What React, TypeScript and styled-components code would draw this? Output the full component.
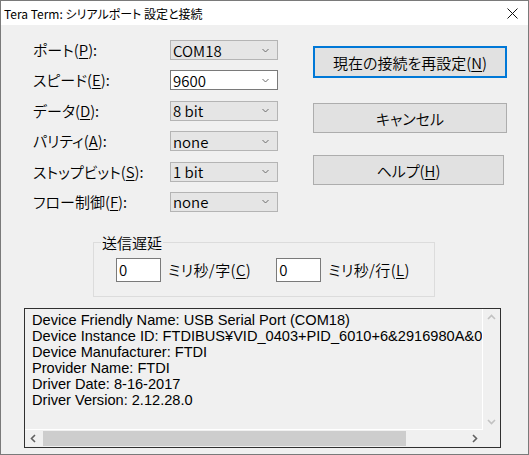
import styled, { createGlobalStyle } from "styled-components";

const GlobalStyle = createGlobalStyle`
  html, body {
    margin: 0;
    padding: 0;
    background: #ffffff;
  }
  body {
    font-family: "Noto Sans CJK JP", "Liberation Sans", sans-serif;
    font-weight: 350;
    color: #000;
  }
`;

const Window = styled.div`
  width: 529px;
  height: 455px;
  box-sizing: border-box;
  border: 1px solid #7a7a7a;
  background: #f0f0f0;
  display: flex;
  flex-direction: column;
  overflow: hidden;
`;

const TitleBar = styled.div`
  height: 24px;
  flex: none;
  background: #ffffff;
  display: flex;
  align-items: center;
  justify-content: space-between;
  padding: 0 10px 0 3px;
  font-size: 12px;
  font-weight: 400;
  font-feature-settings: "palt";
`;

const CloseGlyph = styled.svg`
  width: 11px;
  height: 11px;
  display: block;
`;

const Body = styled.div`
  display: flex;
  flex-direction: column;
  padding-top: 15px;
`;

const TopRow = styled.div`
  display: flex;
  margin-left: 32px;
`;

const FieldGrid = styled.div`
  display: grid;
  grid-template-columns: 137px 108px;
  grid-auto-rows: 20px;
  row-gap: 10.4px;
  align-items: center;
`;

const Label = styled.span`
  font-size: 15px;
  line-height: 18px;
  white-space: nowrap;
  font-feature-settings: "palt";
`;

const Accel = styled.span`
  text-decoration: underline;
  text-underline-offset: 2px;
`;

const Combo = styled.div<{ $editable?: boolean }>`
  height: 20px;
  box-sizing: border-box;
  border: 1px solid ${({ $editable }) => ($editable ? "#7a7a7a" : "#b4b4b4")};
  background: ${({ $editable }) => ($editable ? "#ffffff" : "#e5e5e5")};
  display: flex;
  align-items: center;
  justify-content: space-between;
  padding: 0 8px 0 2px;
  font-size: 15px;
`;

const ComboArrow = styled.svg`
  width: 7px;
  height: 5px;
  display: block;
`;

const ButtonColumn = styled.div`
  display: flex;
  flex-direction: column;
  margin-left: 35px;
`;

const DialogButton = styled.div<{ $default?: boolean; $top: number; $width: number; $height: number }>`
  width: ${({ $width }) => $width}px;
  height: ${({ $height }) => $height}px;
  margin-top: ${({ $top }) => $top}px;
  box-sizing: border-box;
  border: ${({ $default }) => ($default ? "2px solid #0078d7" : "1px solid #adadad")};
  background: #e1e1e1;
  display: flex;
  align-items: center;
  justify-content: center;
  font-size: 15px;
  font-feature-settings: "palt";
`;

const GroupBox = styled.fieldset`
  margin: 22px 0 0 92px;
  padding: 0;
  width: 342px;
  box-sizing: border-box;
  border: 1px solid #dcdcdc;
`;

const GroupTitle = styled.legend`
  margin-left: 7px;
  padding: 0 1px;
  font-size: 15px;
  line-height: 18px;
`;

const DelayRow = styled.div`
  display: flex;
  align-items: center;
  padding: 6px 0 14px 22px;
`;

const NumberEdit = styled.div<{ $gapBefore: number }>`
  width: 45px;
  height: 24px;
  box-sizing: border-box;
  margin-left: ${({ $gapBefore }) => $gapBefore}px;
  border: 1px solid #7a7a7a;
  background: #ffffff;
  display: flex;
  align-items: center;
  padding-left: 2px;
  font-size: 15px;
`;

const UnitLabel = styled(Label)`
  margin-left: 7px;
  letter-spacing: 0.4px;
`;

const InfoBox = styled.div`
  margin: 11px 0 0 23px;
  width: 477px;
  height: 140px;
  box-sizing: border-box;
  border: 1px solid #303030;
  background: #f0f0f0;
  display: grid;
  grid-template-columns: 1fr 17px;
  grid-template-rows: 1fr 17px;
`;

const InfoText = styled.div`
  border-right: 1px solid #ffffff;
  border-bottom: 1px solid #ffffff;
  overflow: hidden;
  padding: 3px 0 0 7px;
  font-family: "Liberation Sans", sans-serif;
  font-weight: 400;
  font-size: 14.6px;
  line-height: 16px;
`;

const InfoLine = styled.div`
  white-space: nowrap;
`;

const VScroll = styled.div`
  display: flex;
  flex-direction: column;
  justify-content: space-between;
`;

const HScroll = styled.div`
  display: flex;
  align-items: center;
`;

const ArrowCell = styled.div`
  width: 17px;
  height: 17px;
  flex: none;
  display: flex;
  align-items: center;
  justify-content: center;
`;

const Track = styled.div`
  flex: 1;
  height: 15px;
`;

const Thumb = styled.div`
  height: 15px;
  width: 363px;
  margin-left: 1px;
  background: #cdcdcd;
`;

type Dir = "up" | "down" | "left" | "right";

const chevronPaths: Record<Dir, string> = {
  up: "M1 6 L4.5 2.5 L8 6",
  down: "M1 3 L4.5 6.5 L8 3",
  left: "M6 1 L2.5 4.5 L6 8",
  right: "M3 1 L6.5 4.5 L3 8",
};

function Chevron({ dir, color }: { dir: Dir; color: string }) {
  return (
    <svg width="9" height="9" viewBox="0 0 9 9">
      <path d={chevronPaths[dir]} fill="none" stroke={color} strokeWidth="1.6" />
    </svg>
  );
}

const fields = [
  { label: "ポート", key: "P", value: "COM18" },
  { label: "スピード", key: "E", value: "9600", editable: true },
  { label: "データ", key: "D", value: "8 bit" },
  { label: "パリティ", key: "A", value: "none" },
  { label: "ストップビット", key: "S", value: "1 bit" },
  { label: "フロー制御", key: "F", value: "none" },
];

const infoLines = [
  "Device Friendly Name: USB Serial Port (COM18)",
  "Device Instance ID: FTDIBUS¥VID_0403+PID_6010+6&2916980A&0",
  "Device Manufacturer: FTDI",
  "Provider Name: FTDI",
  "Driver Date: 8-16-2017",
  "Driver Version: 2.12.28.0",
];

export default function App() {
  return (
    <>
      <GlobalStyle />
      <Window>
        <TitleBar>
          <span>Tera Term: シリアルポート 設定と接続</span>
          <CloseGlyph viewBox="0 0 11 11">
            <path d="M0.5 0.5 L10.5 10.5 M10.5 0.5 L0.5 10.5" stroke="#111" strokeWidth="1" />
          </CloseGlyph>
        </TitleBar>
        <Body>
          <TopRow>
            <FieldGrid>
              {fields.map((f) => [
                <Label key={f.key + "l"}>
                  {f.label}(<Accel>{f.key}</Accel>):
                </Label>,
                <Combo key={f.key + "c"} $editable={f.editable}>
                  <span>{f.value}</span>
                  <ComboArrow viewBox="0 0 7 5">
                    <path d="M0.5 1 L3.5 4 L6.5 1" fill="none" stroke="#6d6d6d" strokeWidth="1" />
                  </ComboArrow>
                </Combo>,
              ])}
            </FieldGrid>
            <ButtonColumn>
              <DialogButton $default $top={6} $width={194} $height={32}>
                現在の接続を再設定(<Accel>N</Accel>)
              </DialogButton>
              <DialogButton $top={25} $width={194} $height={30}>
                キャンセル
              </DialogButton>
              <DialogButton $top={22} $width={191} $height={30}>
                ヘルプ(<Accel>H</Accel>)
              </DialogButton>
            </ButtonColumn>
          </TopRow>

          <GroupBox>
            <GroupTitle>送信遅延</GroupTitle>
            <DelayRow>
              <NumberEdit $gapBefore={0}>0</NumberEdit>
              <UnitLabel>
                ミリ秒/字(<Accel>C</Accel>)
              </UnitLabel>
              <NumberEdit $gapBefore={25}>0</NumberEdit>
              <UnitLabel>
                ミリ秒/行(<Accel>L</Accel>)
              </UnitLabel>
            </DelayRow>
          </GroupBox>

          <InfoBox>
            <InfoText>
              {infoLines.map((l) => (
                <InfoLine key={l}>{l}</InfoLine>
              ))}
            </InfoText>
            <VScroll>
              <ArrowCell>
                <Chevron dir="up" color="#c2c2c2" />
              </ArrowCell>
              <ArrowCell>
                <Chevron dir="down" color="#c2c2c2" />
              </ArrowCell>
            </VScroll>
            <HScroll>
              <ArrowCell>
                <Chevron dir="left" color="#606060" />
              </ArrowCell>
              <Track>
                <Thumb />
              </Track>
              <ArrowCell>
                <Chevron dir="right" color="#606060" />
              </ArrowCell>
            </HScroll>
            <div />
          </InfoBox>
        </Body>
      </Window>
    </>
  );
}
